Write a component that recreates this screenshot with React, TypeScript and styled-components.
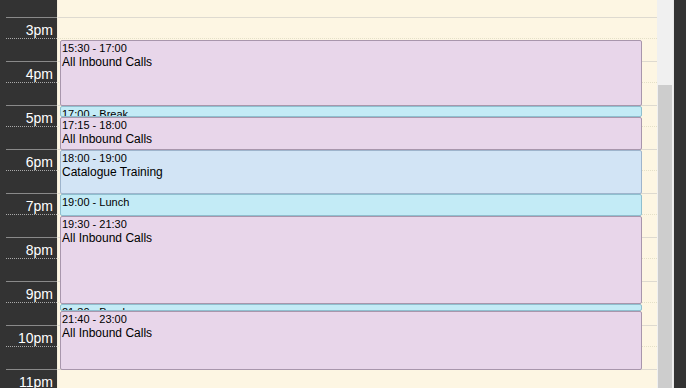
import React from 'react'
import styled, { createGlobalStyle } from 'styled-components'

const HOUR = 44
const START = 14
const OFFSET = -27

const GlobalStyle = createGlobalStyle`
    html, body {
        margin: 0;
        padding: 0;
        overflow: hidden;
        background: #333;
        font-family: "Liberation Sans", Arial, sans-serif;
    }
`

const Frame = styled.div`
    display: flex;
    width: 686px;
    height: 388px;
    overflow: hidden;
    background: #333;
`

const Gutter = styled.div`
    width: 57px;
    flex: none;
    background: #333;
    border-right: 1px solid #f4eedc;
    overflow: hidden;
`

const Column = styled.div`
    display: flex;
    flex-direction: column;
    margin-top: ${OFFSET}px;
`

const GutterHour = styled.div`
    height: ${HOUR}px;
    box-sizing: border-box;
    margin-left: 6px;
    border-top: 1px solid #8a8a8a;
    display: flex;
    flex-direction: column;
`

const GutterLabel = styled.div`
    height: 21px;
    box-sizing: border-box;
    padding: 4px 4px 0 0;
    border-bottom: 1px dotted #aaa;
    color: #fff;
    font-size: 14px;
    line-height: 17px;
    text-align: right;
`

const Content = styled.div`
    position: relative;
    width: 599px;
    flex: none;
    background: #fdf6e3;
    overflow: hidden;
`

const Hour = styled.div`
    height: ${HOUR}px;
    box-sizing: border-box;
    border-top: 1px solid #dedad0;
`

const Half = styled.div`
    height: 21px;
    box-sizing: border-box;
    border-bottom: 1px dotted #e4e0c8;
`

const palettes = {
    calls: { bg: '#e8d6ea', border: '#a896ac' },
    training: { bg: '#d2e4f5', border: '#9eb4cc' },
    pause: { bg: '#c3ebf6', border: '#8fbfcf' },
}

type Kind = keyof typeof palettes

const Event = styled.div<{ $kind: Kind }>`
    position: absolute;
    left: 2px;
    right: 15px;
    box-sizing: border-box;
    padding: 1px 1px;
    background: ${({ $kind }) => palettes[$kind].bg};
    border: 1px solid ${({ $kind }) => palettes[$kind].border};
    border-radius: 2px;
    overflow: hidden;
    color: #000;
`

const Time = styled.div`
    font-size: 11px;
    line-height: 13px;
`

const Title = styled.div`
    font-size: 12px;
    line-height: 15px;
`

const Scrollbar = styled.div`
    width: 17px;
    flex: none;
    background: #f0f0f0;
    border-right: 1px solid #e8e8e8;
    display: flex;
    flex-direction: column;
    padding: 85px 1px 0;
    box-sizing: border-box;
`

const Thumb = styled.div`
    flex: 1;
    background: #cdcdcd;
`

const hours = [14, 15, 16, 17, 18, 19, 20, 21, 22, 23]

const label = (h: number) => `${h > 12 ? h - 12 : h}pm`

type Item = { from: string; to: string; time: string; title?: string; kind: Kind }

const events: Item[] = [
    { from: '15:30', to: '17:00', time: '15:30 - 17:00', title: 'All Inbound Calls', kind: 'calls' },
    { from: '17:00', to: '17:15', time: '17:00 - Break', kind: 'pause' },
    { from: '17:15', to: '18:00', time: '17:15 - 18:00', title: 'All Inbound Calls', kind: 'calls' },
    { from: '18:00', to: '19:00', time: '18:00 - 19:00', title: 'Catalogue Training', kind: 'training' },
    { from: '19:00', to: '19:30', time: '19:00 - Lunch', kind: 'pause' },
    { from: '19:30', to: '21:30', time: '19:30 - 21:30', title: 'All Inbound Calls', kind: 'calls' },
    { from: '21:30', to: '21:40', time: '21:30 - Break', kind: 'pause' },
    { from: '21:40', to: '23:00', time: '21:40 - 23:00', title: 'All Inbound Calls', kind: 'calls' },
]

const toY = (t: string) => {
    const [h, m] = t.split(':').map(Number)
    return Math.round(OFFSET + (h - START + m / 60) * HOUR)
}

const App: React.FC = () => {
    return (
        <>
            <GlobalStyle />
            <Frame>
                <Gutter>
                    <Column>
                        {hours.map((h) => (
                            <GutterHour key={h}>
                                <GutterLabel>{label(h)}</GutterLabel>
                            </GutterHour>
                        ))}
                    </Column>
                </Gutter>
                <Content>
                    <Column>
                        {hours.map((h) => (
                            <Hour key={h}>
                                <Half />
                            </Hour>
                        ))}
                    </Column>
                    {events.map((e) => {
                        const top = toY(e.from) + 1
                        const height = toY(e.to) - top + 1
                        return (
                            <Event key={e.time} $kind={e.kind} style={{ top, height }}>
                                <Time>{e.time}</Time>
                                {e.title && <Title>{e.title}</Title>}
                            </Event>
                        )
                    })}
                </Content>
                <Scrollbar>
                    <Thumb />
                </Scrollbar>
            </Frame>
        </>
    )
}

export default App
